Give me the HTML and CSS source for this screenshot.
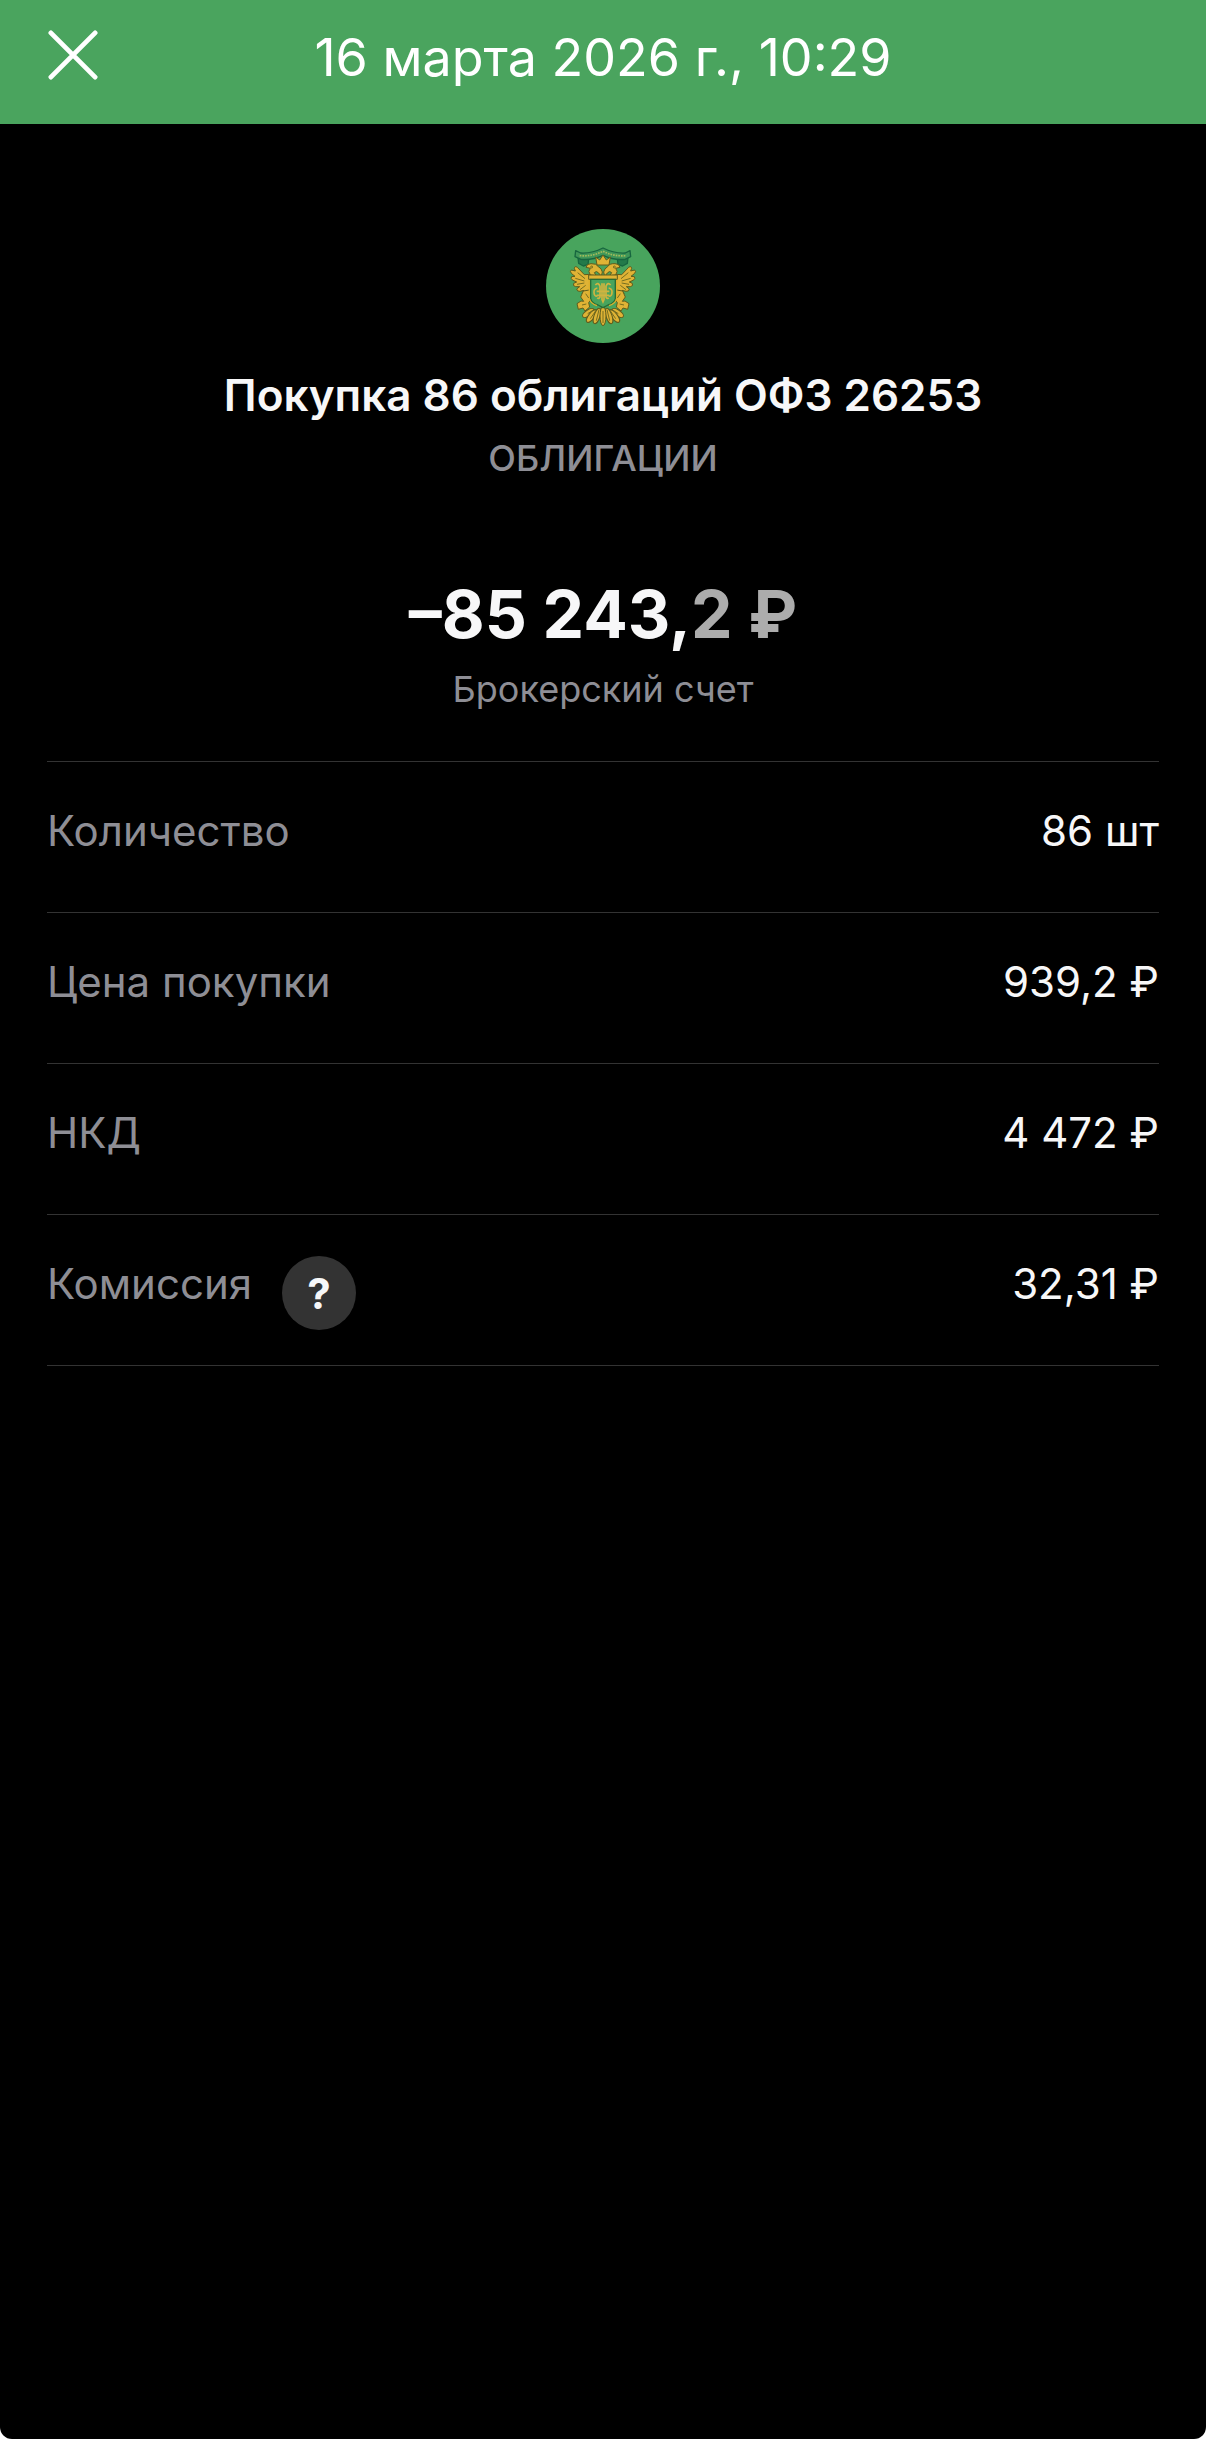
FILE: index.html
```html
<!DOCTYPE html>
<html lang="ru">
  <head>
    <meta charset="UTF-8" />
    <meta name="viewport" content="width=device-width, initial-scale=1.0" />
    <title>Покупка 86 облигаций ОФЗ 26253</title>
    <link rel="stylesheet" href="styles.css">
  </head>
  <body>
    <div class="screen">
      <header class="header">
        <button class="close" type="button" aria-label="Закрыть">
          <svg viewBox="0 0 52 52" fill="none" stroke="#fff" stroke-width="5" stroke-linecap="round">
            <path d="M3 3l46 46M49 3L3 49" />
          </svg>
        </button>
        <h1 class="date">16 марта 2026 г., 10:29</h1>
      </header>

      <main class="content">
        <section class="summary">
          <svg class="emblem" viewBox="50 43 342 342" aria-hidden="true">
            <circle cx="221" cy="214" r="171" fill="#48a45d" />
            <!-- ribbon -->
            <g fill="#3f9658" stroke="#17663f" stroke-width="4" stroke-linejoin="round">
              <path d="M146 128l2 18 14 8 14-4 2-18zM296 128l-2 18-14 8-14-4-2-18z" fill="#237a4a" />
              <path d="M139 108l15 7q33 2 67-15 34 17 67 15l14-7 2 18-17 8q-35 3-66-12-31 15-66 12l-18-8z" />
            </g>
            <path d="M151 123q38 3 70-13 32 16 70 13" fill="none" stroke="#a3bb5b" stroke-width="5" stroke-dasharray="5 3" />
            <g fill="#dfb335" stroke="#615c1c" stroke-width="3" stroke-linejoin="round">
              <!-- wings -->
              <path d="M182 179l-17 1-21-22q-8-5-9 3l3 8-12-3q-6 4 1 11l10 8-10 1q-6 6 4 11l11 5-9 4q-4 8 6 10l12 0-9 7q1 8 10 7l12-3-6 9q3 7 11 4l9-7-1 11q6 4 9-4l7-18z" />
              <path d="M260 179l17 1 21-22q8-5 9 3l-3 8 12-3q6 4-1 11l-10 8 10 1q6 6-4 11l-11 5 9 4q4 8-6 10l-12 0 9 7q-1 8-10 7l-12-3 6 9q-3 7-11 4l-9-7 1 11q-6 4-9-4l-7-18z" />
              <!-- heads -->
              <path d="M216 185l-8-10q-7-8-13-1l6 9-18-2q-9-12 0-20l-13-3q2-11 15-11 17-1 22 9 10 5 12 16z" />
              <path d="M226 185l8-10q7-8 13-1l-6 9 18-2q9-12 0-20l13-3q-2-11-15-11-17-1-22 9-10 5-12 16z" />
              <!-- crown -->
              <path d="M203 151l-4-24 12 9 10-15 10 15 12-9-4 24z" />
              <!-- legs -->
              <path d="M162 229l18-3 7 26-9 12 3 13-14 12-6-9-14 4-4-17 12-8 8 1-9-13z" />
              <path d="M280 229l-18-3-7 26 9 12-3 13 14 12 6-9 14 4 4-17-12-8-8 1 9-13z" />
              <path d="M178 181h86v13h-86z" />
              <!-- tail feathers -->
              <ellipse cx="177" cy="295" rx="9" ry="20" transform="rotate(56 177 295)" />
              <ellipse cx="265" cy="295" rx="9" ry="20" transform="rotate(-56 265 295)" />
              <ellipse cx="187" cy="304" rx="9" ry="23" transform="rotate(38 187 304)" />
              <ellipse cx="255" cy="304" rx="9" ry="23" transform="rotate(-38 255 304)" />
              <ellipse cx="203" cy="304" rx="9" ry="24" transform="rotate(19 203 304)" />
              <ellipse cx="239" cy="304" rx="9" ry="24" transform="rotate(-19 239 304)" />
              <ellipse cx="221" cy="304" rx="9" ry="29" />
            </g>
            <!-- shield -->
            <path d="M184 194h74v58q-3 14-22 19l-15 8-15-8q-19-5-22-19z" fill="#48a45d" stroke="#276c35" stroke-width="4" />
            <path d="M180 196v56q4 16 23 21M262 196v56q-4 16-23 21" fill="none" stroke="#dcae2b" stroke-width="4" />
            <!-- monogram -->
            <g fill="none" stroke="#cfb440" stroke-width="5">
              <path d="M198 211q9-10 14 4v32q-4 7-8 2M244 211q-9-10-14 4v32q4 7 8 2" />
              <path d="M204 220q-11 2-10 14t10 10M238 220q11 2 10 14t-10 10" />
              <path d="M218 206v49l3 7 3-7v-49M202 230h38M202 242h38" />
            </g>
            <!-- feather lines -->
            <g fill="none" stroke="#766e20" stroke-width="3">
              <path d="M145 174l22 18M138 191l27 8M143 209l22-4M152 225l17-13M297 174l-22 18M304 191l-27 8M299 209l-22-4M290 225l-17-13" />
              <path d="M175 297l16-10M267 297l-16-10M183 312l18-26M201 318l8-33M221 325v-36M241 318l-8-33M259 312l-18-26" />
              <path d="M169 237l9 13M158 271l13-3M273 237l-9 13M284 271l-13-3" />
              <circle cx="187" cy="157" r="3" />
              <circle cx="255" cy="157" r="3" />
            </g>
          </svg>
          <h2 class="name">Покупка 86 облигаций ОФЗ 26253</h2>
          <p class="caption caption-type">ОБЛИГАЦИИ</p>
          <p class="amount">–85 243,<span class="fraction">2 ₽</span></p>
          <p class="caption">Брокерский счет</p>
        </section>

        <dl class="details">
          <div class="row">
            <dt>Количество</dt>
            <dd>86 шт</dd>
          </div>
          <div class="row">
            <dt>Цена покупки</dt>
            <dd>939,2 ₽</dd>
          </div>
          <div class="row">
            <dt>НКД</dt>
            <dd>4 472 ₽</dd>
          </div>
          <div class="row">
            <dt>Комиссия <button class="help" type="button" aria-label="О комиссии">?</button></dt>
            <dd>32,31 ₽</dd>
          </div>
        </dl>
      </main>
    </div>
  </body>
</html>
```
FILE: styles.css
```css
* {
  box-sizing: border-box;
}

body {
  margin: 0;
  background: #fff;
  color: #f7f7f8;
  font-family: Inter, "Liberation Sans", sans-serif;
}

h1,
h2,
p,
dl,
dd {
  margin: 0;
}

button {
  border: none;
  padding: 0;
  font-family: inherit;
  cursor: pointer;
}

.screen {
  min-height: 100vh;
  background: #000;
  border-radius: 0 0 12px 12px;
}

.header {
  display: grid;
  grid-template-columns: 50px 1fr 50px;
  align-items: start;
  padding: 28px 48px 36px;
  background: #4aa45e;
  color: #fff;
}

.close {
  height: 54px;
  background: none;
}

.close svg {
  display: block;
  width: 100%;
}

.date {
  font-size: 52px;
  font-weight: 400;
  line-height: 60px;
  text-align: center;
}

.content {
  padding: 105px 47px 0;
}

.summary {
  display: flex;
  flex-direction: column;
  align-items: center;
  padding-bottom: 48px;
  text-align: center;
}

.emblem {
  width: 114px;
  height: 114px;
  margin-bottom: 24px;
}

.name {
  font-size: 44px;
  font-weight: 600;
  line-height: 56px;
}

.caption {
  color: #8e8e95;
  font-size: 36px;
  line-height: 48px;
  margin-top: 11px;
}

.caption-type {
  font-weight: 500;
}

.amount {
  margin-top: 92px;
  font-size: 66px;
  font-weight: 700;
  line-height: 80px;
}

.fraction {
  color: #acacac;
}

.details {
  border-top: 1px solid #333;
}

.row {
  display: flex;
  justify-content: space-between;
  height: 151px;
  padding-top: 41px;
  border-bottom: 1px solid #333;
  font-size: 42px;
  line-height: 56px;
}

.row dt {
  display: flex;
  gap: 30px;
  color: #8e8e95;
}

.help {
  width: 74px;
  height: 74px;
  border-radius: 50%;
  background: #333;
  color: #f7f7f8;
  font-size: 42px;
  font-weight: 700;
}
```
